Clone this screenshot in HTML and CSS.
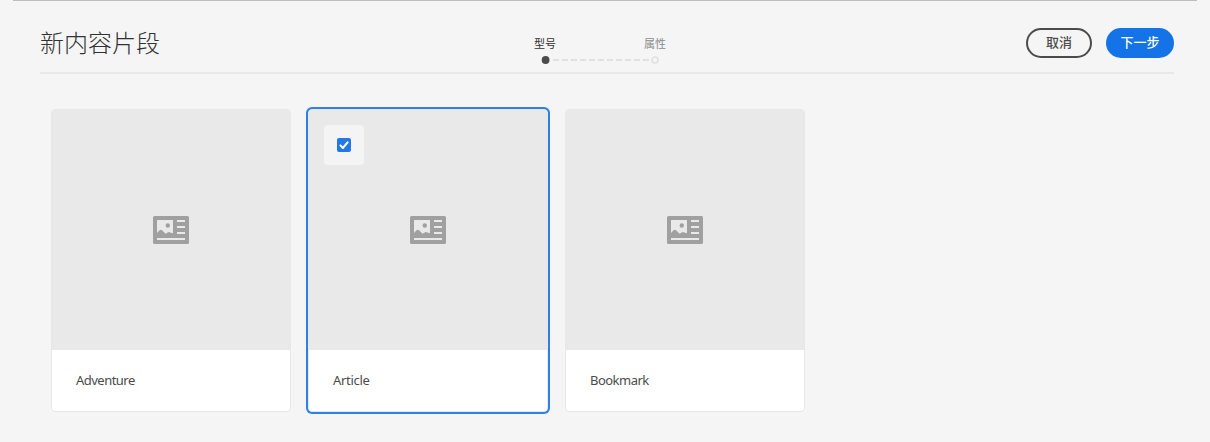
FILE: index.html
```html
<!DOCTYPE html>
<html lang="zh-CN">
<head>
<meta charset="utf-8">
<title>新内容片段</title>
<link rel="stylesheet" href="styles.css">
</head>
<body>
<svg width="0" height="0" class="defs" aria-hidden="true">
  <symbol id="fragment" viewBox="0 0 36 28">
    <path fill="#a0a0a0" fill-rule="evenodd" d="M1.500 0h33A1.500 1.500 0 0 1 36 1.500v25a1.500 1.500 0 0 1-1.500 1.500h-33A1.500 1.500 0 0 1 0 26.500v-25A1.500 1.500 0 0 1 1.500 0zM4 4v13l2.600-2.700q1.400-1 2.700.3l3.200 3.200 2.200-1.300q1.300-.8 2.600 0l2.700 .8V4zM24 4v2h8V4zM24 10v2h8v-2zM24 16v2h8v-2zM4 22v2h28v-2z"/>
    <circle cx="14.800" cy="9.500" r="2.200" fill="#a0a0a0"/>
  </symbol>
</svg>
<div class="topline"></div>
<header class="header">
  <h1 class="title">新内容片段</h1>
  <div class="steps">
    <div class="labels"><span class="label active">型号</span><span class="label">属性</span></div>
    <svg class="track" width="120" height="10" viewBox="0 0 120 10">
      <circle cx="5.600" cy="5" r="3.900" fill="#4b4b4b"/>
      <path d="M13 5h96" stroke="#e1e1e1" stroke-width="2" stroke-dasharray="6 3"/>
      <circle cx="115" cy="5" r="3" fill="#f5f5f5" stroke="#e1e1e1" stroke-width="1.700"/>
    </svg>
  </div>
  <div class="actions">
    <button class="btn cancel">取消</button>
    <button class="btn next">下一步</button>
  </div>
</header>
<main class="cards">
  <article class="card">
    <div class="preview"><svg class="icon"><use href="#fragment"/></svg></div>
    <div class="name">Adventure</div>
  </article>
  <article class="card selected">
    <div class="preview"><svg class="icon"><use href="#fragment"/></svg>
      <span class="check"><svg width="14" height="14" viewBox="0 0 14 14"><rect width="14" height="14" rx="2" fill="#2378e5"/><path d="M3.400 7.400l2.500 2.600 4.700-5.700" fill="none" stroke="#fff" stroke-width="2" stroke-linecap="round" stroke-linejoin="round"/></svg></span>
    </div>
    <div class="name wide">Article</div>
  </article>
  <article class="card">
    <div class="preview"><svg class="icon"><use href="#fragment"/></svg></div>
    <div class="name">Bookmark</div>
  </article>
</main>
</body>
</html>
```
FILE: styles.css
```css
* { box-sizing: border-box; }
body {
  margin: 0;
  height: 442px;
  overflow: hidden;
  background: #f5f5f5;
  color: #4b4b4b;
  font-family: "Noto Sans", "Noto Sans CJK SC", sans-serif;
}
.defs { display: none; }
.topline { height: 1px; margin: 0 13px; background: #bdbdbd; }
.header {
  display: grid;
  grid-template-columns: 500px 1fr auto;
  height: 73px;
  margin: 0 36px 0 40px;
  border-bottom: 2px solid #e8e8e8;
}
.title {
  margin: 23px 0 0;
  font: 300 24px/36px "Noto Sans CJK SC", sans-serif;
  color: #323232;
}
.steps { width: 120px; margin-top: 34px; }
.labels {
  display: flex;
  justify-content: space-between;
  height: 20px;
  margin: 0 -6px;
}
.label { font: 11px/16px "Noto Sans CJK SC", sans-serif; color: #8b8b8b; }
.label.active { color: #323232; }
.track { display: block; }
.actions { display: flex; gap: 14px; padding-top: 27px; }
.btn {
  height: 30px;
  padding: 0 0 2px;
  border-radius: 15px;
  font: 500 13px/18px "Noto Sans CJK SC", sans-serif;
}
.cancel { width: 66px; border: 2px solid #4b4b4b; background: transparent; color: #4b4b4b; }
.next { width: 68px; border: 0; background: #1473e6; color: #fff; }
.cards { display: flex; gap: 17px; padding: 35px 0 0 51px; }
.card {
  width: 240px;
  height: 303px;
  border: 1px solid #e8e8e8;
  border-radius: 4px;
  background: #fff;
}
.selected { box-shadow: 0 0 0 2px #2f80e6; }
.preview {
  position: relative;
  display: flex;
  align-items: center;
  justify-content: center;
  height: 240px;
  border-radius: 3px 3px 0 0;
  background: #e9e9e9;
}
.icon { width: 36px; height: 28px; }
.check {
  position: absolute;
  left: 15px;
  top: 15px;
  width: 40px;
  height: 40px;
  display: flex;
  align-items: center;
  justify-content: center;
  border-radius: 4px;
  background: #f4f4f4;
}
.name {
  padding: 20px 24px 0;
  font-size: 13px;
  line-height: 20px;
  letter-spacing: -0.52px;
}
.wide { letter-spacing: -0.3px; }
```
